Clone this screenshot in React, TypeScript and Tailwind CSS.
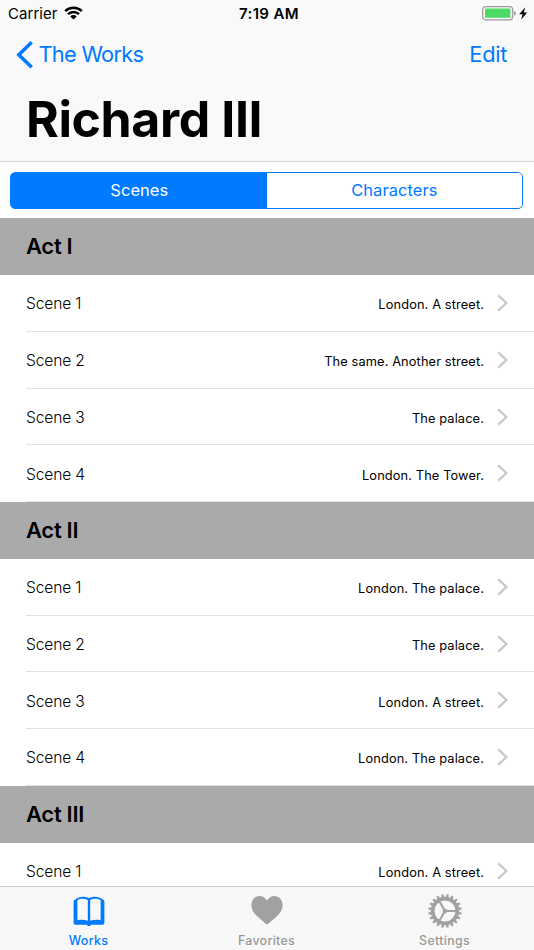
import React from "react";

type Scene = { name: string; place: string };
type Act = { title: string; scenes: Scene[] };

const acts: Act[] = [
  {
    title: "Act I",
    scenes: [
      { name: "Scene 1", place: "London. A street." },
      { name: "Scene 2", place: "The same. Another street." },
      { name: "Scene 3", place: "The palace." },
      { name: "Scene 4", place: "London. The Tower." },
    ],
  },
  {
    title: "Act II",
    scenes: [
      { name: "Scene 1", place: "London. The palace." },
      { name: "Scene 2", place: "The palace." },
      { name: "Scene 3", place: "London. A street." },
      { name: "Scene 4", place: "London. The palace." },
    ],
  },
  { title: "Act III", scenes: [{ name: "Scene 1", place: "London. A street." }] },
];

function StatusBar() {
  return (
    <div className="grid h-7 grid-cols-3 items-center text-[15px] leading-7">
      <div className="flex items-center gap-[6px] pl-2">
        <span className="tracking-[0.05px]">Carrier</span>
        <svg width="19" height="14" viewBox="0 0 19 14" fill="none" stroke="#000" strokeWidth="2.5" className="-mt-0.5">
          <path d="M1.2 5.1a12 12 0 0 1 16.6 0" />
          <path d="M4 8.2a8 8 0 0 1 11 0" />
          <path d="M9.5 13.5 6.3 10.4a4.6 4.6 0 0 1 6.4 0z" fill="#000" stroke="none" />
        </svg>
      </div>
      <div className="pl-1 text-center font-semibold tracking-[0.4px]">7:19 AM</div>
      <div className="flex justify-end pr-[6px]">
        <svg width="46" height="16" viewBox="0 0 46 16">
          <rect x="0.7" y="0.6" width="30" height="13.2" rx="3" fill="none" stroke="#9b9b9b" strokeWidth="1.2" />
          <rect x="3" y="2.6" width="25.4" height="9.2" rx="1" fill="#4cd964" />
          <path d="M32 5c2.4.7 2.4 4 0 4.7z" fill="#9b9b9b" />
          <path d="M43.3 1.2 37.2 8.2h3.4l-1.5 5.6 6-7.4h-3.4z" fill="#000" />
        </svg>
      </div>
    </div>
  );
}

function NavigationBar() {
  return (
    <header className="h-[162px] border-b border-[#d4d4d4] bg-[#f9f9f9]">
      <StatusBar />
      <div className="flex h-[54px] items-center justify-between pl-4 pr-[27px] text-[21.8px] text-[#007aff]">
        <div className="flex items-center gap-[4.5px]">
          <svg width="18" height="28" viewBox="0 0 18 28" fill="none" stroke="currentColor" strokeWidth="3.5">
            <path d="M15.7 1.3 2.8 13.7l12.9 12.5" strokeLinejoin="miter" />
          </svg>
          <span className="-mt-px tracking-[-0.72px]">The Works</span>
        </div>
        <span className="-mt-px tracking-[-0.3px]">Edit</span>
      </div>
      <h1 className="pl-[26px] text-[50px] font-bold leading-[74px] tracking-[-0.4px]">Richard III</h1>
    </header>
  );
}

function SegmentedControl() {
  return (
    <div className="h-[56.4px] pl-[10.4px] pr-[10.8px] pt-[9.7px]">
      <div className="flex h-[37.4px] rounded-[5.5px] bg-[#007aff] p-[1.4px] text-[16.5px] leading-[35px] tracking-[0.05px]">
        <div className="flex-1 text-center text-white">Scenes</div>
        <div className="flex-1 rounded-r-[4px] bg-white text-center text-[#007aff]">Characters</div>
      </div>
    </div>
  );
}

function SceneRow({ name, place }: Scene) {
  return (
    <div className="h-[56.75px] pl-[26px]">
      <div className="flex h-full items-center border-b border-[#e2e2e4] pr-[25px]">
        <span className="pt-[2px] text-[15.6px] font-light tracking-[-0.15px]">{name}</span>
        <span className="ml-auto pt-[4px] text-[12.8px] tracking-[0.12px]">{place}</span>
        <svg width="12" height="18" viewBox="0 0 12 18" fill="none" stroke="#c7c7cc" strokeWidth="2.3" className="ml-[13px]">
          <path d="m1.3 1.3 8.1 7.7-8.1 7.7" />
        </svg>
      </div>
    </div>
  );
}

function BookIcon() {
  return (
    <svg width="32" height="32" viewBox="0 0 32 32">
      <path d="M2.4 3.6C5.5.3 12 0 16 2.3 20 0 26.5.3 29.6 3.6q1.8 0 1.8 1.6v21.6q0 2-2 2H18.2c-.7 1.6-3.7 1.6-4.4 0H2.6q-2 0-2-2V5.2q0-1.6 1.8-1.6z" fill="#007aff" />
      <path d="M4.4 4.2c3-1.9 7.2-1.7 10.4-.2v20.8c-3.3-1.2-7.2-1.4-10.4-.6zM17.2 4c3.2-1.5 7.4-1.7 10.4.2v20c-3.2-.8-7.1-.6-10.4.6z" fill="#f8f8f8" />
    </svg>
  );
}

function HeartIcon() {
  return (
    <svg width="32" height="32" viewBox="0 0 32 32" fill="#a1a1a1">
      <path d="M16 5.6C14.3 2.7 11.6 1 8.6 1 4 1 .4 4.8.4 10.2c0 8.6 9.2 13.4 14.4 18.6q1.2 1.1 2.4 0c5.2-5.2 14.4-10 14.4-18.6C31.6 4.8 28 1 23.4 1c-3 0-5.7 1.7-7.4 4.6z" />
    </svg>
  );
}

function GearIcon() {
  const teeth = Array.from({ length: 20 }, (_, i) => i * 18);
  return (
    <svg width="34" height="34" viewBox="-17 -17 34 34" fill="none" stroke="#a1a1a1">
      <circle r="12.3" strokeWidth="3.7" />
      {teeth.map((angle) => (
        <path key={angle} d="M13.4-1.5 16.8-1V1L13.4 1.5z" fill="#a1a1a1" stroke="none" transform={`rotate(${angle + 9})`} />
      ))}
      <path d="M0 0h12M0 0l-6-10.4M0 0l-6 10.4" strokeWidth="2.1" />
      <circle r="2.3" fill="#a1a1a1" stroke="none" />
    </svg>
  );
}

function TabBar() {
  return (
    <footer className="grid h-[64px] shrink-0 grid-cols-3 border-t border-[#cfcfcf] bg-[#f8f8f8] text-[12.4px] font-medium tracking-[0.32px] text-[#999]">
      <div className="flex flex-col items-center pt-[9px] pr-px text-[#007aff]">
        <BookIcon />
        <span className="mt-[4px] leading-[18px]">Works</span>
      </div>
      <div className="flex flex-col items-center pt-[8px] pr-px">
        <HeartIcon />
        <span className="mt-[5px] leading-[18px]">Favorites</span>
      </div>
      <div className="flex flex-col items-center pt-[7px] pr-px">
        <GearIcon />
        <span className="mt-[4px] leading-[18px]">Settings</span>
      </div>
    </footer>
  );
}

export default function App() {
  return (
    <div className="flex h-[950px] w-[534px] flex-col overflow-hidden whitespace-nowrap bg-white font-['Inter',sans-serif] text-black">
      <NavigationBar />
      <main className="min-h-0 flex-1 overflow-hidden">
        <SegmentedControl />
        {acts.map((act) => (
          <section key={act.title}>
            <h2 className="h-[56.75px] bg-[#aaaaaa] pl-[26px] text-[22px] font-semibold leading-[57px] tracking-[-0.3px]">{act.title}</h2>
            {act.scenes.map((scene) => (
              <SceneRow key={scene.name} {...scene} />
            ))}
          </section>
        ))}
      </main>
      <TabBar />
    </div>
  );
}
